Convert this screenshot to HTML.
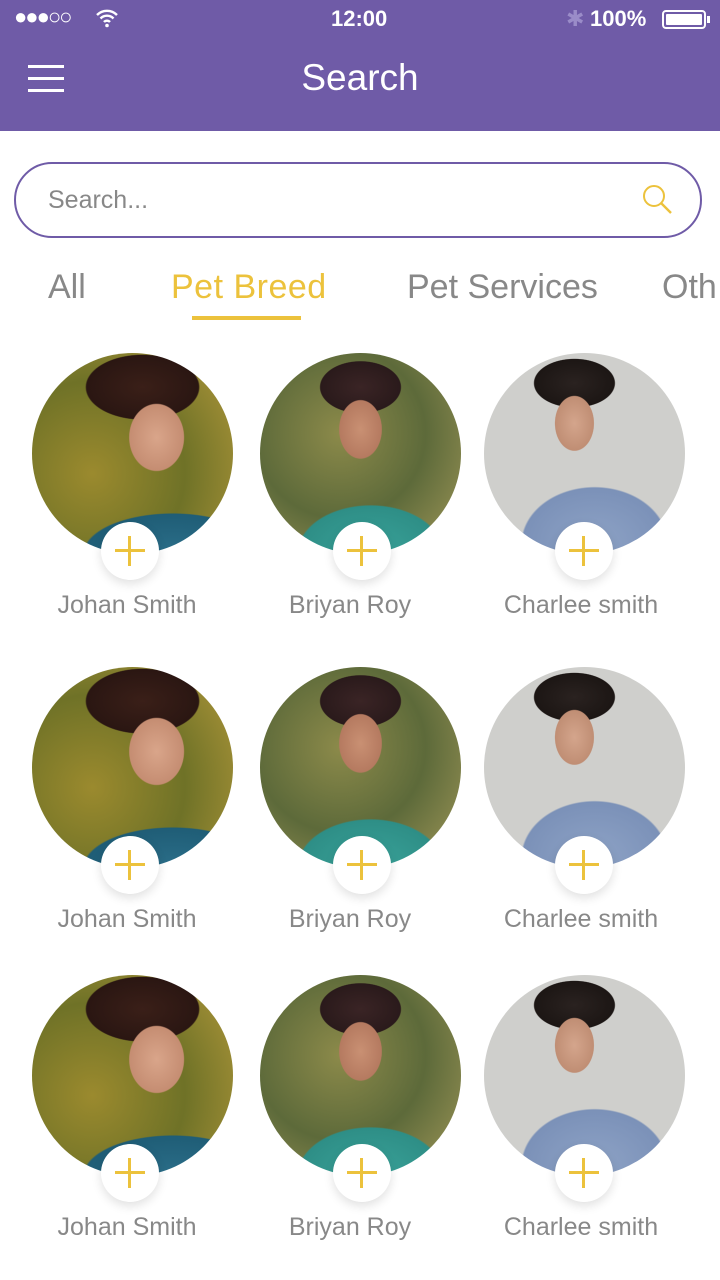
<!DOCTYPE html>
<html><head><meta charset="utf-8"><style>
*{margin:0;padding:0;box-sizing:border-box}
body{width:720px;height:1280px;background:#fff;font-family:"Liberation Sans",sans-serif;position:relative;overflow:hidden}
.hdr{position:absolute;left:0;top:0;width:720px;height:131px;background:#6f5ba7;color:#fff}
.sb{position:absolute;top:6px;font-size:22px}
.title{position:absolute;top:57px;left:0;width:720px;text-align:center;font-size:37px;font-weight:300}
.menu{position:absolute;left:28px;top:65px;width:36px}
.menu div{height:3px;background:#fff;margin-bottom:9px}
.search{position:absolute;left:14px;top:162px;width:688px;height:76px;border:2px solid #6f5ba7;border-radius:38px}
.search span{position:absolute;left:32px;top:22px;font-size:25px;color:#888}
.tab{position:absolute;top:268px;font-size:34px;color:#888}
.av{position:absolute;width:201px;height:201px;border-radius:50%;overflow:hidden}
.plus{position:absolute;width:58px;height:58px;border-radius:50%;background:#fff;box-shadow:0 4px 10px rgba(0,0,0,.12)}
.plus:before{content:"";position:absolute;left:14px;top:27px;width:30px;height:3px;background:#ecc23c}
.plus:after{content:"";position:absolute;left:27px;top:14px;width:3px;height:30px;background:#ecc23c}
.nm{position:absolute;width:220px;text-align:center;font-size:25px;color:#888}
.p1{background:radial-gradient(ellipse 45px 55px at 62% 42%,#d9a58a 0,#c58d72 60%,transparent 62%),radial-gradient(ellipse 70px 40px at 55% 17%,#3a1f18 0,#2a1612 80%,transparent 82%),radial-gradient(ellipse 110px 50px at 70% 100%,#2b6e89 0,#1f5d76 80%,transparent 82%),radial-gradient(circle at 30% 60%,#9b8a2e,#6f7227 50%,#b59a3c)}
.p2{background:radial-gradient(ellipse 35px 48px at 50% 38%,#c99073 0,#b57a60 60%,transparent 62%),radial-gradient(ellipse 50px 32px at 50% 17%,#3a2425 0,#2a1a1b 80%,transparent 82%),radial-gradient(ellipse 90px 60px at 55% 100%,#3aa39a 0,#2e8e86 80%,transparent 82%),radial-gradient(circle at 40% 40%,#8c8a4a,#5d6a3a 50%,#a49a5a)}
.p3{background:radial-gradient(ellipse 32px 45px at 45% 35%,#d4a58c 0,#c08e74 60%,transparent 62%),radial-gradient(ellipse 50px 30px at 45% 15%,#2a2220 0,#1c1614 80%,transparent 82%),radial-gradient(ellipse 90px 70px at 55% 95%,#8ea3c6 0,#7b91b8 80%,transparent 82%),#cfcfcc}
</style></head><body>
<div class="hdr">
<div class="sb" style="left:14px;top:4px;letter-spacing:-2px">●●●○○</div>
<svg style="position:absolute;left:95px;top:8px" width="24" height="20" viewBox="0 0 24 20"><path d="M2 7a14 14 0 0 1 20 0M5.5 10.5a9 9 0 0 1 13 0M9 14a4 4 0 0 1 6 0" stroke="#fff" stroke-width="2.4" fill="none"/><circle cx="12" cy="17.5" r="1.8" fill="#fff"/></svg>
<div class="sb" style="left:331px;font-weight:bold">12:00</div>
<div class="sb" style="left:566px;color:#9a8cc8">✱</div>
<div class="sb" style="left:590px;font-weight:bold">100%</div>
<div style="position:absolute;left:662px;top:10px;width:44px;height:19px;border:2px solid #fff;border-radius:4px;padding:2px"><div style="background:#fff;height:100%;border-radius:1px"></div></div>
<div style="position:absolute;left:707px;top:16px;width:3px;height:7px;background:#fff"></div>
<div class="menu"><div></div><div></div><div></div></div>
<div class="title">Search</div>
</div>
<div class="search"><span>Search...</span>
<svg style="position:absolute;left:624px;top:18px" width="36" height="36" viewBox="0 0 36 36"><circle cx="14" cy="14" r="10" stroke="#ecc23c" stroke-width="2" fill="none"/><path d="M21 21l10 10" stroke="#ecc23c" stroke-width="2.4"/></svg></div>
<div class="tab" style="left:48px">All</div>
<div class="tab" style="left:171px;color:#ecc23c;letter-spacing:0.5px">Pet Breed</div>
<div style="position:absolute;left:192px;top:316px;width:109px;height:4px;background:#ecc23c"></div>
<div class="tab" style="left:407px">Pet Services</div>
<div class="tab" style="left:662px">Oth</div>

<div class="av p1" style="left:32px;top:353px"></div><div class="av p2" style="left:260px;top:353px"></div><div class="av p3" style="left:484px;top:353px"></div>
<div class="plus" style="left:101px;top:522px"></div><div class="plus" style="left:333px;top:522px"></div><div class="plus" style="left:555px;top:522px"></div>
<div class="nm" style="left:17px;top:591px">Johan Smith</div><div class="nm" style="left:240px;top:591px">Briyan Roy</div><div class="nm" style="left:471px;top:591px">Charlee smith</div>

<div class="av p1" style="left:32px;top:667px"></div><div class="av p2" style="left:260px;top:667px"></div><div class="av p3" style="left:484px;top:667px"></div>
<div class="plus" style="left:101px;top:836px"></div><div class="plus" style="left:333px;top:836px"></div><div class="plus" style="left:555px;top:836px"></div>
<div class="nm" style="left:17px;top:905px">Johan Smith</div><div class="nm" style="left:240px;top:905px">Briyan Roy</div><div class="nm" style="left:471px;top:905px">Charlee smith</div>

<div class="av p1" style="left:32px;top:975px"></div><div class="av p2" style="left:260px;top:975px"></div><div class="av p3" style="left:484px;top:975px"></div>
<div class="plus" style="left:101px;top:1144px"></div><div class="plus" style="left:333px;top:1144px"></div><div class="plus" style="left:555px;top:1144px"></div>
<div class="nm" style="left:17px;top:1213px">Johan Smith</div><div class="nm" style="left:240px;top:1213px">Briyan Roy</div><div class="nm" style="left:471px;top:1213px">Charlee smith</div>
</body></html>
